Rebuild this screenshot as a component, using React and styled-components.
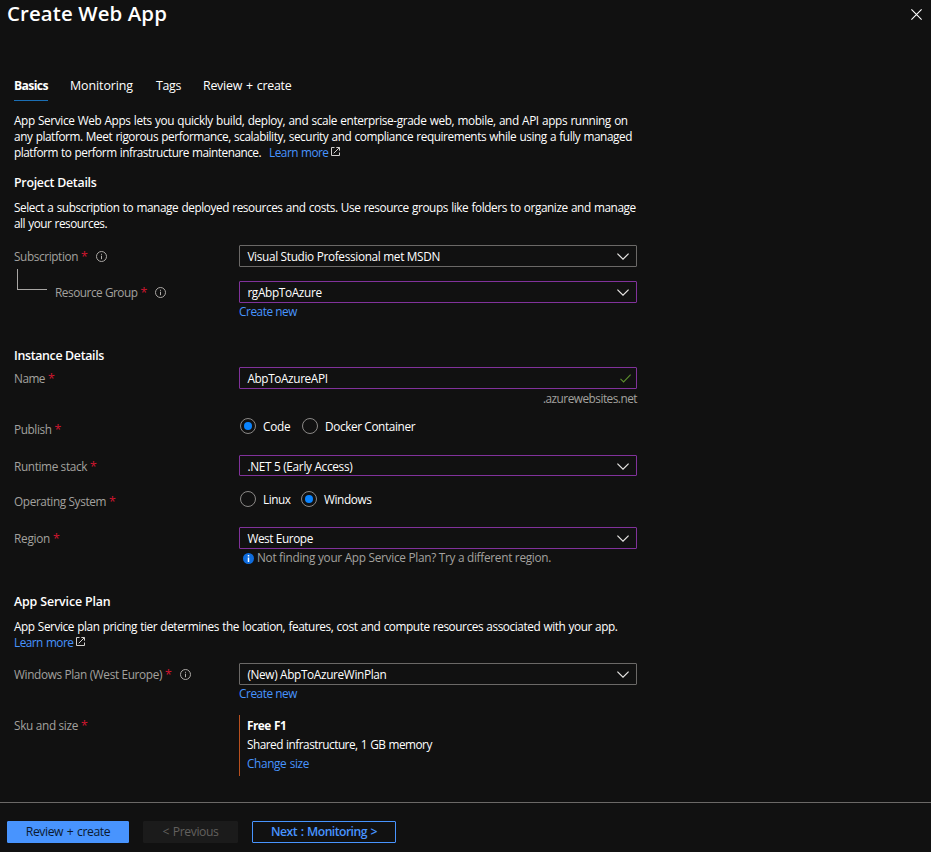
import React from "react";
import styled, { createGlobalStyle } from "styled-components";

const GlobalStyle = createGlobalStyle`
  *, *::before, *::after { box-sizing: border-box; }
  body {
    margin: 0;
    background: #111111;
    color: #ffffff;
    font-family: "Open Sans", "Segoe UI", sans-serif;
    font-size: 11.8px;
    line-height: 14px;
  }
`;

const Page = styled.div`
  display: flex;
  flex-direction: column;
  width: 931px;
  height: 852px;
  background: #111111;
  overflow: hidden;
`;

const Header = styled.header`
  display: flex;
  justify-content: space-between;
  height: 74px;
  padding: 0 8px 0 7px;
`;

const Title = styled.h1`
  margin: 0;
  font-size: 20.4px;
  font-weight: 600;
  line-height: 26px;
  letter-spacing: 0.122px;
`;

const CloseButton = styled.button`
  display: flex;
  align-items: center;
  justify-content: center;
  width: 13px;
  height: 13px;
  margin-top: 8px;
  padding: 0;
  border: 0;
  background: none;
  color: #ffffff;
`;

const Tabs = styled.nav`
  display: flex;
  height: 27px;
  padding-left: 14px;
`;

const Tab = styled.a`
  width: ${(p) => p.$width}px;
  margin-right: ${(p) => p.$gap}px;
  height: 27px;
  line-height: 24px;
  font-size: ${(p) => (p.$active ? 12.2 : 12.4)}px;
  font-weight: ${(p) => (p.$active ? 700 : 400)};
  word-spacing: 1px;
  letter-spacing: ${(p) => p.$track}px;
  white-space: nowrap;
  border-bottom: 1px solid ${(p) => (p.$active ? "#1b6fb5" : "transparent")};
`;

const Form = styled.main`
  display: flex;
  flex-direction: column;
  height: 701px;
  padding: 12px 0 0 14px;
`;

const Paragraph = styled.p`
  margin: 0 0 ${(p) => p.$after}px;
`;

const Line = styled.span`
  display: flex;
  align-items: flex-start;
  height: 16px;
  white-space: nowrap;
  word-spacing: 0.6px;
  letter-spacing: ${(p) => p.$track}px;
`;

const Heading = styled.h2`
  margin: 0;
  height: ${(p) => p.$height}px;
  font-size: 12.4px;
  font-weight: 600;
  line-height: 18px;
  letter-spacing: ${(p) => p.$track}px;
`;

const Link = styled.a`
  color: #4894fe;
  letter-spacing: ${(p) => p.$track}px;
  margin-left: ${(p) => p.$indent || 0}px;
  white-space: nowrap;
`;

const Row = styled.div`
  display: grid;
  grid-template-columns: 225px 398px;
  height: ${(p) => p.$height}px;
`;

const LabelCell = styled.div`
  display: flex;
  align-items: flex-start;
  padding-top: ${(p) => p.$top}px;
`;

const Label = styled.label`
  color: #a3a19f;
  white-space: nowrap;
  letter-spacing: ${(p) => p.$track}px;
`;

const Asterisk = styled.span`
  margin: 1px 0 0 3px;
  color: #d0162f;
  font-size: 12.4px;
`;

const InfoSlot = styled.span`
  display: flex;
  margin: 2px 0 0 8px;
`;

const Elbow = styled.span`
  width: 30px;
  height: 21px;
  margin: 0 8px 0 3px;
  border: solid #a8a6a4;
  border-width: 0 0 1px 1px;
`;

const FieldCell = styled.div`
  display: flex;
  flex-direction: column;
  padding-top: ${(p) => p.$top || 0}px;
`;

const Field = styled.div`
  display: flex;
  align-items: center;
  justify-content: space-between;
  height: ${(p) => p.$height || 22}px;
  padding: 0 ${(p) => p.$right || 7}px 0 7.4px;
  border: 1px solid ${(p) => (p.$edited ? "#81329b" : "#6b6967")};
  border-radius: 1px;

  svg {
    margin-top: 1px;
  }
`;

const Value = styled.span`
  white-space: nowrap;
  letter-spacing: ${(p) => p.$track}px;
`;

const BelowField = styled.div`
  display: flex;
  align-items: flex-start;
  height: 16px;
  margin-top: ${(p) => p.$top ?? 1}px;
  color: #a3a19f;
  white-space: nowrap;
  justify-content: ${(p) => (p.$end ? "flex-end" : "flex-start")};
  letter-spacing: ${(p) => p.$track || 0}px;
`;

const NoteIcon = styled.span`
  display: flex;
  margin: 3px 3px 0 4px;
`;

const RadioGroup = styled.div`
  display: flex;
  align-items: center;
  height: 16px;
  padding-left: 1px;
`;

const RadioOption = styled.label`
  display: flex;
  align-items: center;
  gap: 7px;
  width: ${(p) => p.$width}px;
  white-space: nowrap;
  letter-spacing: ${(p) => p.$track}px;
`;

const RadioCircle = styled.span`
  display: flex;
  align-items: center;
  justify-content: center;
  flex: none;
  width: 16px;
  height: 16px;
  border: 1px solid #8a8886;
  border-radius: 50%;

  &::after {
    content: "";
    width: 8px;
    height: 8px;
    border-radius: 50%;
    background: ${(p) => (p.$checked ? "#0a84ff" : "transparent")};
  }
`;

const SkuCard = styled.div`
  display: flex;
  flex-direction: column;
  height: 61px;
  padding: 1px 0 0 7px;
  border-left: 1px solid #b8501f;
`;

const SkuLine = styled.span`
  height: 19px;
  line-height: 19px;
  font-weight: ${(p) => (p.$bold ? 700 : 400)};
  word-spacing: 0.6px;
  letter-spacing: ${(p) => p.$track}px;
`;

const Footer = styled.footer`
  display: flex;
  align-items: flex-start;
  height: 50px;
  padding: 18px 0 0 7px;
  border-top: 1px solid #6b6967;
`;

const Button = styled.button`
  width: ${(p) => p.$width}px;
  height: 22px;
  margin-right: 14px;
  padding: 0;
  font-family: inherit;
  font-size: 12.2px;
  line-height: 20px;
  word-spacing: 1px;
  letter-spacing: ${(p) => p.$track}px;
  border-radius: 1px;
  border: 1px solid;
  ${(p) =>
    ({
      primary: "background:#4894fe;border-color:#4894fe;color:#0b1a30;",
      disabled: "background:#1b1b1b;border-color:#1b1b1b;color:#62605e;",
      outline: "background:#111111;border-color:#4894fe;color:#4894fe;font-weight:600;",
    })[p.$kind]}
`;

const CloseIcon = () => (
  <svg width="11" height="11" viewBox="0 0 11 11" fill="none" stroke="currentColor" strokeWidth="1.1">
    <path d="M0.4 0.4L10.6 10.6M10.6 0.4L0.4 10.6" />
  </svg>
);

const ChevronIcon = () => (
  <svg width="12" height="7" viewBox="0 0 12 7" fill="none" stroke="#e8e6e4" strokeWidth="1.2">
    <path d="M0.4 0.6L6 6.1L11.6 0.6" />
  </svg>
);

const CheckIcon = () => (
  <svg width="11" height="9" viewBox="0 0 11 9" fill="none" stroke="#5c8f2e" strokeWidth="1.1">
    <path d="M0.5 4.9L3.6 8L10.6 0.7" />
  </svg>
);

const InfoIcon = () => (
  <svg width="11" height="11" viewBox="0 0 11 11" fill="none" stroke="#b3b0ad">
    <circle cx="5.5" cy="5.5" r="5" strokeWidth="0.95" />
    <path d="M5.5 4.7V8.2M5.5 2.8V3.8" strokeWidth="1" />
  </svg>
);

const InfoFilledIcon = () => (
  <svg width="11" height="11" viewBox="0 0 11 11">
    <circle cx="5.5" cy="5.5" r="5.5" fill="#0f6cdd" />
    <path d="M5.5 4.6V9M5.5 2V3.6" stroke="#ffffff" strokeWidth="1.5" />
  </svg>
);

const ExternalSlot = styled.span`
  display: flex;
  margin: 2px 0 0 3px;
`;

const ExternalIcon = () => (
  <ExternalSlot>
    <svg width="9" height="9" viewBox="0 0 9 9" fill="none" stroke="#d2d0ce" strokeWidth="1">
      <path d="M3.5 0.5H0.5V8.5H8.5V5.5M5.3 0.5H8.5V3.7M8.3 0.7L2.7 6.3" />
    </svg>
  </ExternalSlot>
);

function FieldLabel({ text, track, top, info, nested }) {
  return (
    <LabelCell $top={nested ? 0 : top}>
      {nested && <Elbow />}
      <LabelCell $top={nested ? top : 0}>
        <Label $track={track}>{text}</Label>
        <Asterisk>*</Asterisk>
        {info && (
          <InfoSlot>
            <InfoIcon />
          </InfoSlot>
        )}
      </LabelCell>
    </LabelCell>
  );
}

function Select({ value, track, edited, height }) {
  return (
    <Field $edited={edited} $height={height}>
      <Value $track={track}>{value}</Value>
      <ChevronIcon />
    </Field>
  );
}

function Radio({ text, checked, width, track }) {
  return (
    <RadioOption $width={width} $track={track}>
      <RadioCircle $checked={checked} />
      {text}
    </RadioOption>
  );
}

export default function App() {
  return (
    <>
      <GlobalStyle />
      <Page>
        <Header>
          <Title>Create Web App</Title>
          <CloseButton aria-label="Close">
            <CloseIcon />
          </CloseButton>
        </Header>
        <Tabs>
          <Tab $active $width={34} $gap={22} $track={-0.62}>Basics</Tab>
          <Tab $width={63} $gap={23} $track={-0.072}>Monitoring</Tab>
          <Tab $width={25} $gap={22} $track={-0.33}>Tags</Tab>
          <Tab $width={89} $gap={0} $track={-0.25}>Review + create</Tab>
        </Tabs>
        <Form>
          <Paragraph $after={13}>
            <Line $track={-0.384}>App Service Web Apps lets you quickly build, deploy, and scale enterprise-grade web, mobile, and API apps running on</Line>
            <Line $track={-0.43}>any platform. Meet rigorous performance, scalability, security and compliance requirements while using a fully managed</Line>
            <Line $track={-0.489}>
              platform to perform infrastructure maintenance.
              <Link $track={-0.52} $indent={8}>Learn more</Link>
              <ExternalIcon />
            </Line>
          </Paragraph>
          <Heading $height={26} $track={-0.277}>Project Details</Heading>
          <Paragraph $after={13}>
            <Line $track={-0.42}>Select a subscription to manage deployed resources and costs. Use resource groups like folders to organize and manage</Line>
            <Line $track={-0.477}>all your resources.</Line>
          </Paragraph>
          <Row $height={24}>
            <FieldLabel text="Subscription" track={-0.39} top={4} info />
            <Select value="Visual Studio Professional met MSDN" track={-0.32} />
          </Row>
          <Row $height={78}>
            <FieldLabel text="Resource Group" track={-0.46} top={16} info nested />
            <FieldCell $top={12}>
              <Select value="rgAbpToAzure" track={-0.34} edited />
              <BelowField>
                <Link $track={-0.43}>Create new</Link>
              </BelowField>
            </FieldCell>
          </Row>
          <Heading $height={20} $track={-0.338}>Instance Details</Heading>
          <Row $height={51}>
            <FieldLabel text="Name" track={-0.5} top={4} />
            <FieldCell>
              <Field $edited $right={5}>
                <Value $track={-0.37}>AbpToAzureAPI</Value>
                <CheckIcon />
              </Field>
              <BelowField $end $top={2} $track={-0.5}>.azurewebsites.net</BelowField>
            </FieldCell>
          </Row>
          <Row $height={37}>
            <FieldLabel text="Publish" track={-0.407} top={4} />
            <RadioGroup>
              <Radio text="Code" checked width={62} track={-0.21} />
              <Radio text="Docker Container" width={120} track={-0.38} />
            </RadioGroup>
          </Row>
          <Row $height={36}>
            <FieldLabel text="Runtime stack" track={-0.365} top={4} />
            <Select value=".NET 5 (Early Access)" track={-0.302} edited height={21} />
          </Row>
          <Row $height={36}>
            <FieldLabel text="Operating System" track={-0.376} top={3} />
            <RadioGroup>
              <Radio text="Linux" width={61} track={-0.456} />
              <Radio text="Windows" checked width={80} track={-0.378} />
            </RadioGroup>
          </Row>
          <Row $height={66}>
            <FieldLabel text="Region" track={-0.265} top={4} />
            <FieldCell>
              <Select value="West Europe" track={-0.404} edited />
              <BelowField $track={-0.281}>
                <NoteIcon>
                  <InfoFilledIcon />
                </NoteIcon>
                Not finding your App Service Plan? Try a different region.
              </BelowField>
            </FieldCell>
          </Row>
          <Heading $height={26} $track={-0.147}>App Service Plan</Heading>
          <Paragraph $after={12}>
            <Line $track={-0.427}>App Service plan pricing tier determines the location, features, cost and compute resources associated with your app.</Line>
            <Line $track={0}>
              <Link $track={-0.52}>Learn more</Link>
              <ExternalIcon />
            </Line>
          </Paragraph>
          <Row $height={52}>
            <FieldLabel text="Windows Plan (West Europe)" track={-0.346} top={4} info />
            <FieldCell>
              <Select value="(New) AbpToAzureWinPlan" track={-0.336} />
              <BelowField>
                <Link $track={-0.43}>Create new</Link>
              </BelowField>
            </FieldCell>
          </Row>
          <Row $height={61}>
            <FieldLabel text="Sku and size" track={-0.3125} top={3} />
            <SkuCard>
              <SkuLine $bold $track={-0.5}>Free F1</SkuLine>
              <SkuLine $track={-0.5}>Shared infrastructure, 1 GB memory</SkuLine>
              <SkuLine>
                <Link $track={-0.36}>Change size</Link>
              </SkuLine>
            </SkuCard>
          </Row>
        </Form>
        <Footer>
          <Button $kind="primary" $width={122} $track={-0.43}>Review + create</Button>
          <Button $kind="disabled" $width={95} $track={-0.4}>&lt; Previous</Button>
          <Button $kind="outline" $width={144} $track={-0.54}>Next : Monitoring &gt;</Button>
        </Footer>
      </Page>
    </>
  );
}
